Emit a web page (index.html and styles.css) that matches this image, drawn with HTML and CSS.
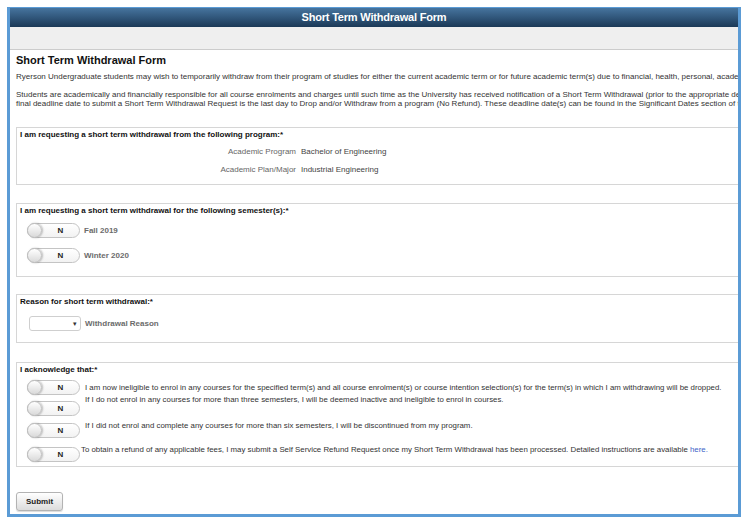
FILE: index.html
```html
<!DOCTYPE html>
<html lang="en">
<head>
    <meta charset="UTF-8">
    <title>Short Term Withdrawal Form</title>
    <link rel="stylesheet" href="styles.css">
</head>
<body>
    <div class="frame">
        <div class="titlebar">Short Term Withdrawal Form</div>
        <div class="toolbar"></div>

        <div class="content">
            <h1>Short Term Withdrawal Form</h1>
            <p class="intro">Ryerson Undergraduate students may wish to temporarily withdraw from their program of studies for either the current academic term or for future academic term(s) due to financial, health, personal, academic or other reasons.</p>
            <p class="intro">Students are academically and financially responsible for all course enrolments and charges until such time as the University has received notification of a Short Term Withdrawal (prior to the appropriate deadline date). The<br>final deadline date to submit a Short Term Withdrawal Request is the last day to Drop and/or Withdraw from a program (No Refund). These deadline date(s) can be found in the Significant Dates section of the Undergraduate Calendar.</p>

            <div class="box box-program">
                <div class="box-title">I am requesting a short term withdrawal from the following program:*</div>
                <div class="field-row">
                    <span class="field-label">Academic Program</span>
                    <span class="field-value">Bachelor of Engineering</span>
                </div>
                <div class="field-row">
                    <span class="field-label">Academic Plan/Major</span>
                    <span class="field-value">Industrial Engineering</span>
                </div>
            </div>

            <div class="box box-terms">
                <div class="box-title">I am requesting a short term withdrawal for the following semester(s):*</div>
                <div class="toggle-row first">
                    <span class="toggle"><span class="knob"></span><span class="toggle-text">N</span></span>
                    <span class="toggle-label">Fall 2019</span>
                </div>
                <div class="toggle-row">
                    <span class="toggle"><span class="knob"></span><span class="toggle-text">N</span></span>
                    <span class="toggle-label">Winter 2020</span>
                </div>
            </div>

            <div class="box box-reason">
                <div class="box-title">Reason for short term withdrawal:*</div>
                <div class="select-row">
                    <span class="select"><span class="arrow">&#9662;</span></span>
                    <span class="toggle-label">Withdrawal Reason</span>
                </div>
            </div>

            <div class="box box-ack">
                <div class="box-title">I acknowledge that:*</div>
                <div class="ack-row first">
                    <span class="toggle"><span class="knob"></span><span class="toggle-text">N</span></span>
                    <span class="ack-text">I am now ineligible to enrol in any courses for the specified term(s) and all course enrolment(s) or course intention selection(s) for the term(s) in which I am withdrawing will be dropped.</span>
                </div>
                <div class="ack-row second">
                    <span class="toggle"><span class="knob"></span><span class="toggle-text">N</span></span>
                    <span class="ack-text">If I do not enrol in any courses for more than three semesters, I will be deemed inactive and ineligible to enrol in courses.</span>
                </div>
                <div class="ack-row third">
                    <span class="toggle"><span class="knob"></span><span class="toggle-text">N</span></span>
                    <span class="ack-text">If I did not enrol and complete any courses for more than six semesters, I will be discontinued from my program.</span>
                </div>
                <div class="ack-row fourth">
                    <span class="toggle"><span class="knob"></span><span class="toggle-text">N</span></span>
                    <span class="ack-text">To obtain a refund of any applicable fees, I may submit a Self Service Refund Request once my Short Term Withdrawal has been processed. Detailed instructions are available <a href="#">here.</a></span>
                </div>
            </div>

            <button class="submit">Submit</button>
        </div>
    </div>
</body>
</html>
```

FILE: styles.css
```css
body {
    margin: 0;
    background: #ffffff;
    font-family: "Liberation Sans", Arial, sans-serif;
    color: #333333;
}

.frame {
    box-sizing: border-box;
    margin: 7px 0 0 7px;
    width: 734px;
    height: 510px;
    border: 3px solid #5b9bd5;
    border-top-width: 1px;
    overflow: hidden;
}

.titlebar {
    height: 19px;
    line-height: 18px;
    text-align: center;
    color: #ffffff;
    font-family: "Liberation Sans", Arial, sans-serif;
    font-weight: bold;
    font-size: 11px;
    letter-spacing: -0.2px;
    background: linear-gradient(#46749e, #1b3957);
}

.toolbar {
    height: 22px;
    background: #efefef;
    border-bottom: 1px solid #cccccc;
}

.content {
    padding-left: 6px;
    width: 1000px;
}

h1 {
    margin: 3px 0 0;
    font-size: 11px;
    line-height: 14px;
    color: #111111;
}

.intro {
    margin: 5px 0 0;
    font-size: 8px;
    line-height: 9px;
    white-space: nowrap;
    color: #333333;
}

.intro + .intro {
    margin-top: 9px;
}

.box {
    box-sizing: border-box;
    width: 760px;
    border: 1px solid #d6d6d6;
    padding: 2px 0 0 3px;
    margin-top: 18px;
}

.box-program {
    margin-top: 19px;
    height: 58px;
}

.box-terms {
    height: 74px;
}

.box-reason {
    margin-top: 17px;
    height: 49px;
}

.box-ack {
    margin-top: 19px;
    height: 105px;
}

.box-title {
    font-size: 8px;
    line-height: 10px;
    font-weight: bold;
    color: #111111;
}

.field-row {
    display: flex;
    align-items: center;
    height: 18px;
    font-size: 8px;
}

.box-title + .field-row {
    margin-top: 2px;
}

.field-label {
    width: 276px;
    text-align: right;
    color: #666666;
}

.field-value {
    margin-left: 5px;
    color: #444444;
}

.toggle-row,
.select-row {
    display: flex;
    align-items: center;
    margin-left: 7px;
}

.toggle-row.first {
    margin-top: 7px;
}

.toggle-row + .toggle-row {
    margin-top: 10px;
}

.toggle {
    position: relative;
    box-sizing: border-box;
    display: inline-block;
    flex: none;
    width: 53px;
    height: 15px;
    border: 1px solid #c4c4c4;
    border-radius: 8px;
    background: linear-gradient(#ffffff, #f2f2f2);
}

.knob {
    position: absolute;
    left: -1px;
    top: -1px;
    box-sizing: border-box;
    width: 15px;
    height: 15px;
    border: 1px solid #bdbdbd;
    border-radius: 50%;
    background: linear-gradient(#ffffff, #d9d9d9);
    box-shadow: 1px 0 2px rgba(0, 0, 0, 0.25);
}

.toggle-text {
    position: absolute;
    left: 14px;
    right: 0;
    top: 0;
    line-height: 13px;
    text-align: center;
    font-size: 8px;
    font-weight: bold;
    color: #222222;
}

.toggle-label {
    margin-left: 4px;
    font-size: 8px;
    font-weight: bold;
    color: #6b6b6b;
}

.select-row {
    margin-top: 9px;
    margin-left: 9px;
}

.select {
    box-sizing: border-box;
    display: inline-block;
    position: relative;
    width: 52px;
    height: 15px;
    border: 1px solid #cfcfcf;
    border-radius: 3px;
    background: #ffffff;
}

.arrow {
    position: absolute;
    right: 3px;
    top: 0;
    font-size: 7px;
    line-height: 13px;
    color: #333333;
}

.ack-row {
    display: flex;
    align-items: flex-start;
    margin-left: 7px;
}

.ack-row.first {
    margin-top: 5px;
    align-items: center;
}

.ack-row.second {
    margin-top: 6px;
}

.ack-row.third {
    margin-top: 7px;
}

.ack-row.fourth {
    margin-top: 9px;
}

.ack-text {
    margin-left: 5px;
    font-size: 7.85px;
    line-height: 10px;
    white-space: nowrap;
    color: #333333;
}

.ack-row.second .ack-text {
    margin-top: -6px;
}

.ack-row.third .ack-text {
    margin-top: -2px;
}

.ack-row.fourth .ack-text {
    margin-top: -2px;
    margin-left: 1px;
}

.ack-text a {
    color: #3c64c8;
    text-decoration: none;
}

.submit {
    display: block;
    margin-top: 25px;
    width: 47px;
    height: 19px;
    padding: 0;
    font-family: "Liberation Sans", Arial, sans-serif;
    font-size: 8px;
    font-weight: bold;
    color: #222222;
    border: 1px solid #b3b3b3;
    border-radius: 3px;
    background: linear-gradient(#ffffff, #dcdcdc);
    box-shadow: 0 1px 1px rgba(0, 0, 0, 0.15);
}
```
